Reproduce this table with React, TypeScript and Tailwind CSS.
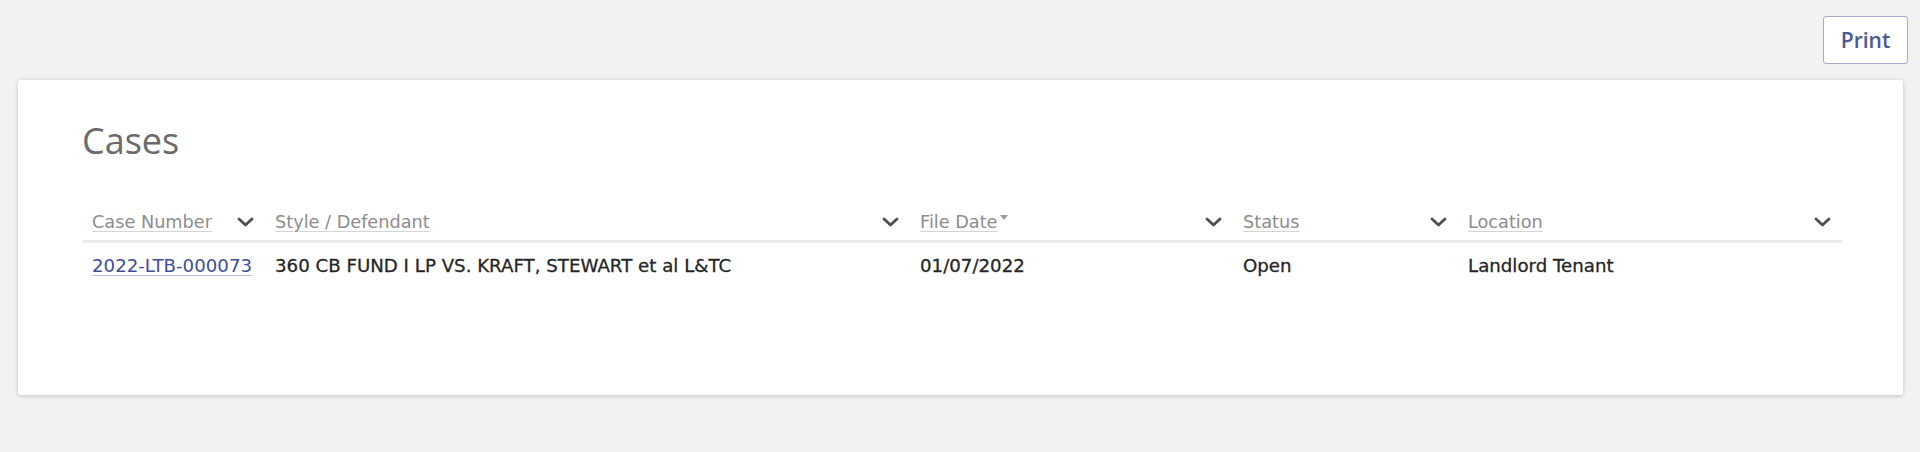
import React from "react";

const Chevron = () => (
  <svg width="17" height="10" viewBox="0 0 17 10" className="shrink-0">
    <polyline points="2,2 8.5,8 15,2" fill="none" stroke="#4f4f4f" strokeWidth="2.8" strokeLinecap="round" strokeLinejoin="round" />
  </svg>
);

const cols = [
  { label: "Case Number" },
  { label: "Style / Defendant" },
  { label: "File Date", sort: true },
  { label: "Status" },
  { label: "Location" },
];

const cell = "pl-[10px] pt-[11px] text-[#262626] text-[18.2px] [-webkit-text-stroke:0.3px_#262626]";

export default function App() {
  return (
    <div className="w-[1920px] h-[452px] bg-[#f2f2f2] overflow-hidden" style={{ fontFamily: '"DejaVu Sans", Verdana, sans-serif' }}>
      <div className="flex justify-end pt-[16px] pr-[12px]">
        <button className="w-[85px] h-[48px] bg-white border-[1.5px] border-[#a3abd0] rounded-[3px] text-[#4b5899] text-[21px] font-semibold leading-none" style={{ fontFamily: '"Open Sans", sans-serif' }}>
          Print
        </button>
      </div>
      <div className="mt-[16px] ml-[18px] mr-[17px] h-[315px] bg-white rounded-[3px] shadow-[0_1px_4px_rgba(0,0,0,0.22)] pl-[64px] pr-[61px] pt-[41px]">
        <h1 className="text-[36px] leading-[40px] text-[#6b6b6b] font-normal" style={{ fontFamily: '"Open Sans", sans-serif' }}>
          Cases
        </h1>
        <div className="mt-[43px] grid grid-cols-[183px_645px_323px_225px_384px] text-[17.7px] leading-[24px]">
          {cols.map((c) => (
            <div key={c.label} className="flex items-center justify-between pl-[10px] pr-[11px] pt-[6px] pb-[6px] border-b-[3px] border-[#ececec]">
              <span className="text-[#8d8d8d] flex items-start">
                <span className="underline decoration-[#d4d4d4] underline-offset-[3px]">{c.label}</span>
                {c.sort && (
                  <svg width="10" height="8" viewBox="0 0 10 8" className="mt-[4px] ml-[1px]">
                    <polygon points="1,1 9,1 5,6" fill="#9a9a9a" />
                  </svg>
                )}
              </span>
              <Chevron />
            </div>
          ))}
          <div className="pl-[10px] pt-[11px] text-[18.2px]">
            <a href="#" className="text-[#3f4e98] underline decoration-[#b8bfdf] underline-offset-[3px]">2022-LTB-000073</a>
          </div>
          <div className={cell}>360 CB FUND I LP VS. KRAFT, STEWART et al L&amp;TC</div>
          <div className={cell}>01/07/2022</div>
          <div className={cell}>Open</div>
          <div className={cell}>Landlord Tenant</div>
        </div>
      </div>
    </div>
  );
}
